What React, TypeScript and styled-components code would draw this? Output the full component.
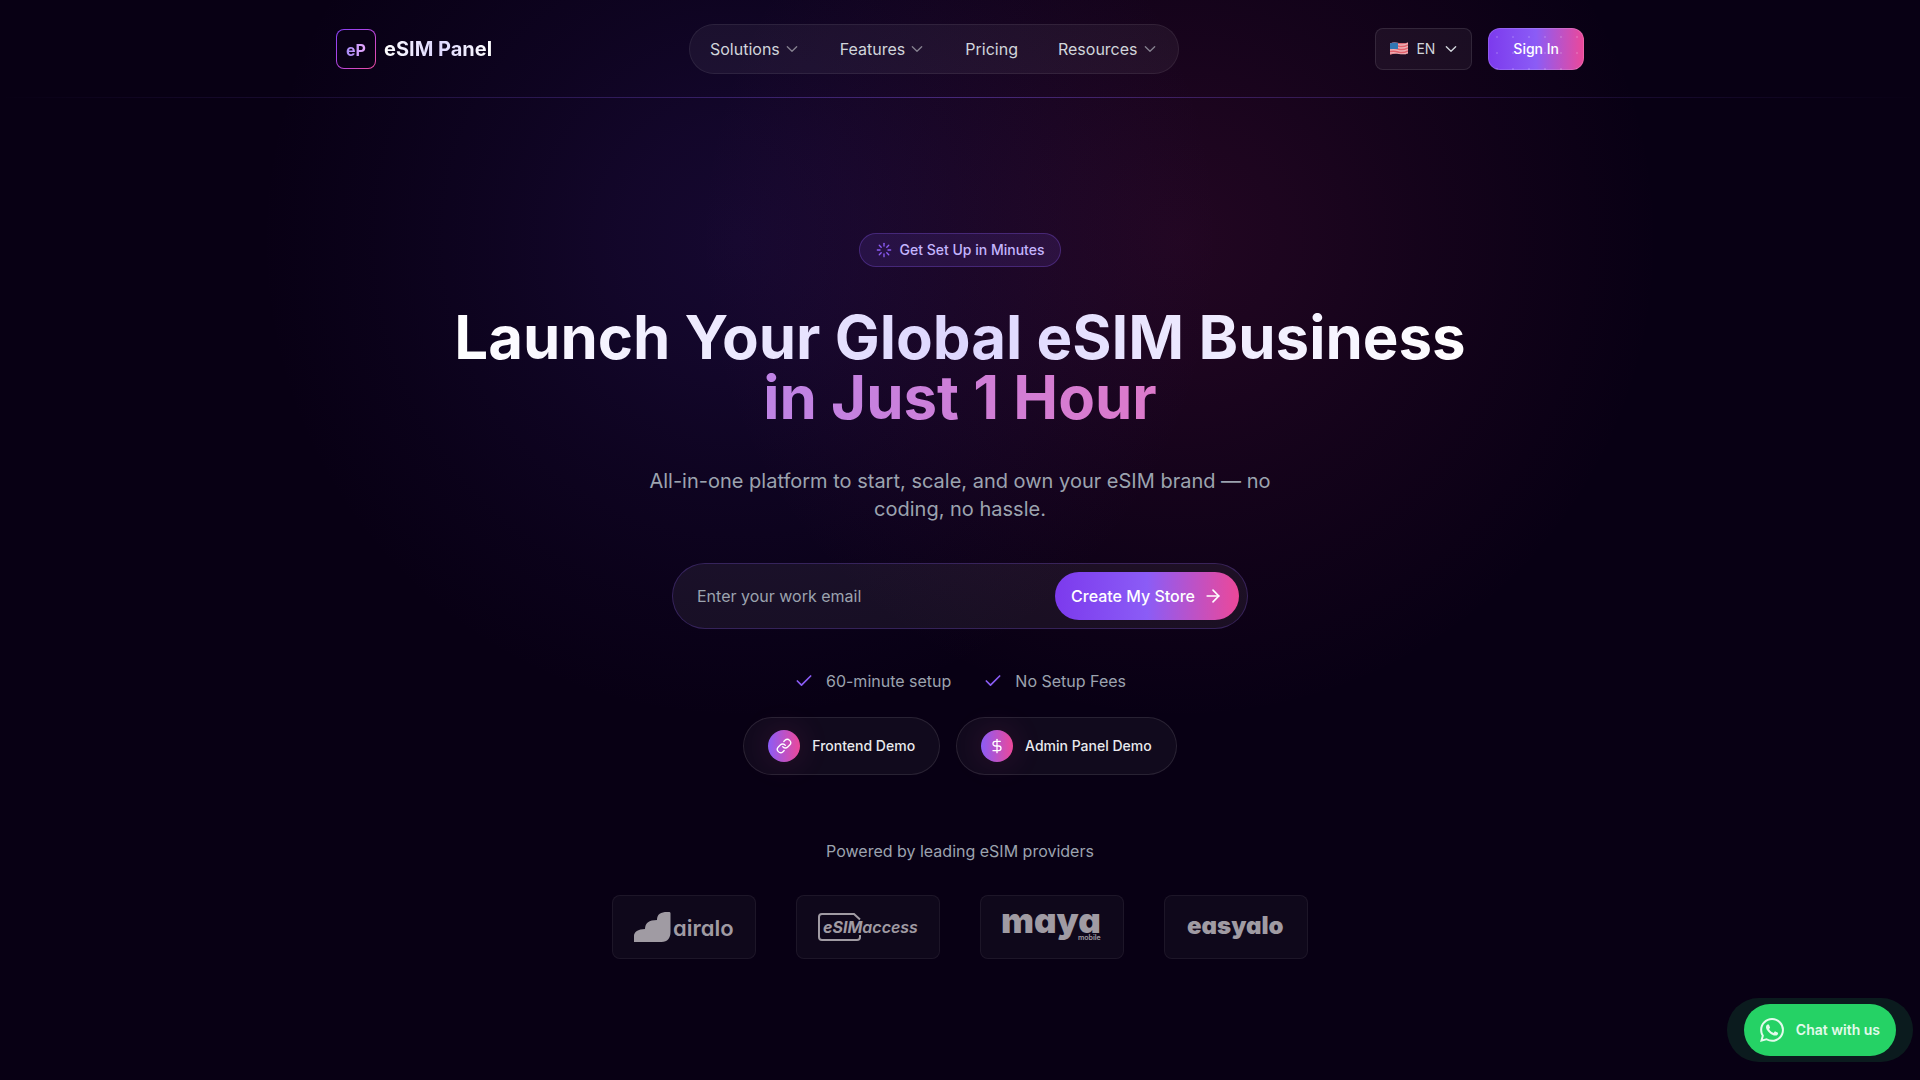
import React from "react";
import styled, { createGlobalStyle, css } from "styled-components";
import { ArrowRight, Check, DollarSign, Link, Loader } from "lucide-react";
import { SiWhatsapp } from "react-icons/si";

const font = `Inter, "Noto Sans", sans-serif`;

const GlobalStyle = createGlobalStyle`
  *, *::before, *::after { box-sizing: border-box; }
  html { background: #080014; }
  body {
    margin: 0;
    font-family: ${font};
    font-size: 16px;
    line-height: 24px;
    color: #fff;
    -webkit-font-smoothing: antialiased;
  }
  h1, p, ul { margin: 0; padding: 0; }
  ul { list-style: none; }
  a { color: inherit; text-decoration: none; }
  button, input, select { font: inherit; color: inherit; }
`;

const brandGradient = css`
  background-image: linear-gradient(90deg, #7c3aed 0%, #8b5cf6 50%, #ec4899 100%);
`;

const Page = styled.div`
  min-height: 100vh;
  background:
    radial-gradient(circle 480px at calc(50% - 220px) 240px, rgba(91, 50, 190, 0.16), rgba(91, 50, 190, 0.13) 25%, rgba(91, 50, 190, 0.08) 50%, rgba(91, 50, 190, 0.03) 78%, transparent),
    radial-gradient(circle 480px at calc(50% + 220px) 240px, rgba(190, 44, 116, 0.14), rgba(190, 44, 116, 0.11) 25%, rgba(190, 44, 116, 0.07) 50%, rgba(190, 44, 116, 0.03) 78%, transparent),
    #080014;
`;

const Header = styled.header`
  padding: 24px 16px 23px;
  border-bottom: 1px solid;
  border-image: linear-gradient(90deg, transparent, rgba(139, 92, 246, 0.4) 50%, transparent) 1;
`;

const HeaderInner = styled.div`
  display: flex;
  align-items: center;
  justify-content: space-between;
  max-width: 1248px;
  margin: 0 auto;
`;

const Brand = styled.a`
  display: flex;
  align-items: center;
  gap: 8px;
`;

const BrandMark = styled.span`
  display: grid;
  place-items: center;
  width: 40px;
  height: 40px;
  border: 1px solid transparent;
  border-radius: 8px;
  background:
    linear-gradient(#0a0116, #0a0116) padding-box,
    linear-gradient(135deg, #8440f5, #b846e0 50%, #f04da0) border-box;
`;

const GradientText = styled.span<{ $stops: string }>`
  background: linear-gradient(90deg, ${(p) => p.$stops});
  -webkit-background-clip: text;
  background-clip: text;
  color: transparent;
`;

const Monogram = styled(GradientText)`
  font-size: 16px;
  font-weight: 700;
  padding-top: 2px;
`;

const BrandName = styled(GradientText)`
  font-size: 20px;
  line-height: 28px;
  font-weight: 700;
`;

const Nav = styled.nav`
  display: flex;
  gap: 8px;
  padding: 4px;
  border: 1px solid rgba(255, 255, 255, 0.07);
  border-radius: 32px;
  background: rgba(255, 255, 255, 0.05);
`;

const NavItem = styled.button`
  display: flex;
  align-items: center;
  gap: 4px;
  padding: 8px 16px;
  border: 0;
  background: none;
  color: #d1d5db;
  cursor: pointer;
`;

const NavLink = styled(NavItem).attrs({ as: "a" })<{ href: string }>``;

const Actions = styled.div`
  display: flex;
  gap: 16px;
`;

const Language = styled.label`
  display: flex;
  align-items: center;
  gap: 8px;
  height: 42px;
  padding: 0 12px;
  border: 1px solid rgba(255, 255, 255, 0.1);
  border-radius: 8px;
  background: rgba(255, 255, 255, 0.05);
  font-size: 14px;
  line-height: 20px;
  color: #d1d5db;
`;

const LanguageSelect = styled.select`
  appearance: none;
  padding: 0;
  border: 0;
  background: none;
  cursor: pointer;
  field-sizing: content;
  option { color: #111; }
`;

const SignIn = styled.a`
  display: flex;
  align-items: center;
  height: 42px;
  padding: 0 24px;
  border: 1px solid rgba(255, 255, 255, 0.15);
  border-radius: 12px;
  background:
    radial-gradient(circle at 1px 1px, rgba(255, 255, 255, 0.14) 1px, transparent 1px) 7px 7px / 16px 16px,
    linear-gradient(90deg, #7c3aed, #8b5cf6 50%, #ec4899) border-box;
  font-size: 14px;
  line-height: 20px;
  font-weight: 500;
`;

const Hero = styled.main`
  display: flex;
  flex-direction: column;
  align-items: center;
  gap: 40px;
  padding: 135px 16px 96px;
  text-align: center;
`;

const Badge = styled.div`
  display: flex;
  align-items: center;
  gap: 8px;
  padding: 6px 16px;
  border: 1px solid rgba(139, 92, 246, 0.3);
  border-radius: 17px;
  background: rgba(139, 92, 246, 0.12);
  font-size: 14px;
  line-height: 20px;
  font-weight: 500;
  color: #c4b5fd;
  svg { color: #8b5cf6; }
`;

const Title = styled.h1`
  font-size: 60px;
  line-height: 60px;
  font-weight: 700;
`;

const TitleLine = styled(GradientText)`
  display: block;
`;

const Lead = styled.p`
  max-width: 672px;
  font-size: 20px;
  line-height: 28px;
  color: #9ca3af;
`;

const SignupForm = styled.form`
  display: flex;
  width: 100%;
  max-width: 576px;
  padding: 8px;
  border: 1px solid rgba(139, 92, 246, 0.25);
  border-radius: 33px;
  background: rgba(255, 255, 255, 0.06);
`;

const EmailInput = styled.input`
  flex: 1;
  min-width: 0;
  padding: 0 16px;
  border: 0;
  outline: 0;
  background: none;
  &::placeholder { color: #9ca3af; opacity: 1; }
`;

const SubmitButton = styled.button`
  display: flex;
  align-items: center;
  gap: 8px;
  padding: 12px 16px;
  border: 0;
  border-radius: 24px;
  ${brandGradient}
  font-weight: 500;
  cursor: pointer;
`;

const Proof = styled.div`
  display: flex;
  flex-direction: column;
  align-items: center;
  gap: 24px;
`;

const CheckList = styled.ul`
  display: flex;
  flex-wrap: wrap;
  gap: 32px;
`;

const CheckItem = styled.li`
  display: flex;
  align-items: center;
  gap: 12px;
  color: #9ca3af;
  svg { color: #8b5cf6; }
`;

const DemoRow = styled.div`
  display: flex;
  flex-wrap: wrap;
  gap: 16px;
`;

const DemoLink = styled.a`
  display: flex;
  align-items: center;
  gap: 12px;
  padding: 12px 24px;
  border: 1px solid rgba(255, 255, 255, 0.1);
  border-radius: 29px;
  background: rgba(255, 255, 255, 0.04);
  font-size: 14px;
  line-height: 20px;
  font-weight: 500;
  color: #e9eaee;
`;

const DemoIcon = styled.span`
  display: grid;
  place-items: center;
  width: 32px;
  height: 32px;
  border-radius: 50%;
  background: linear-gradient(90deg, #8b5cf6, #ec4899);
  box-shadow: 0 0 32px rgba(236, 72, 153, 0.16);
  color: #fff;
`;

const Providers = styled.section`
  display: flex;
  flex-direction: column;
  align-items: center;
  gap: 32px;
  padding-top: 24px;
  color: #9ca3af;
`;

const ProviderList = styled.ul`
  display: flex;
  flex-wrap: wrap;
  justify-content: center;
  gap: 40px;
`;

const ProviderCard = styled.li`
  display: grid;
  place-items: center;
  width: 144px;
  height: 64px;
  border: 1px solid rgba(255, 255, 255, 0.06);
  border-radius: 8px;
  background: rgba(255, 255, 255, 0.03);
`;

const LogoSvg = styled.svg`
  display: block;
  overflow: visible;
  fill: #a09ba3;
  font-family: ${font};
  font-feature-settings: "cv11";
`;

const ChatLink = styled.a`
  position: fixed;
  right: 24px;
  bottom: 24px;
  display: flex;
  align-items: center;
  gap: 12px;
  padding: 14px 16px;
  border-radius: 26px;
  background: #25d366;
  font-size: 14px;
  font-weight: 600;
  color: #e3faec;
  &::before {
    content: "";
    position: absolute;
    inset: -6px -17px;
    z-index: -1;
    border-radius: 32px;
    background: rgba(37, 211, 102, 0.13);
  }
`;

function Chevron({ color = "#85808f" }: { color?: string }) {
  return (
    <svg width="16" height="16" viewBox="0 0 24 24" fill="none" stroke={color} strokeWidth="2" strokeLinecap="round" strokeLinejoin="round" aria-hidden="true">
      <path d="M19 8.500l-7 7-7-7" />
    </svg>
  );
}

function UsFlag() {
  return (
    <svg width="20" height="16" viewBox="0 0 20 16" aria-hidden="true">
      <clipPath id="flag-wave">
        <path d="M2 2.500C5 1 8 1.500 11 2S17 2.500 20 1.500v11c-3 1-6 1-9 .5S5 12.500 2 13.500z" />
      </clipPath>
      <g clipPath="url(#flag-wave)">
        <rect width="20" height="16" fill="#eeb0b6" />
        {[2, 5, 8, 11, 14].map((y) => (
          <path key={y} d={`M0 ${y}C4 ${y - 1} 7 ${y - 1} 10 ${y}S16 ${y + 1} 20 ${y - 1}`} stroke="#e2606c" strokeWidth="1.500" fill="none" />
        ))}
        <path d="M0 0h10v8H0z" fill="#3276b4" />
      </g>
    </svg>
  );
}

function AiraloLogo() {
  return (
    <LogoSvg width="102" height="32" viewBox="0 0 102 32" role="img" aria-label="airalo">
      <path d="M1 31v-6c0-4 4-7 11-7 0-6 4-9 12-9 0-6 4-8 10-8h2c1 0 1.500.5 1.500 1.500V21c0 6-3 10-9 10z" />
      <text x="40" y="25" fontSize="22" fontWeight="600">airalo</text>
    </LogoSvg>
  );
}

function EsimAccessLogo() {
  return (
    <LogoSvg width="102" height="30" viewBox="0 0 102 30" role="img" aria-label="eSIMaccess">
      <path d="M43 7.500 37 2H5C3 2 2 3 2 5v20c0 2 1 3 3 3h35c2 0 3-1 3-3v-2" fill="none" stroke="#a09ba3" strokeWidth="2" />
      <text x="6" y="21" fontSize="16" fontWeight="700" fontStyle="italic">eSIM<tspan fontWeight="600">access</tspan></text>
    </LogoSvg>
  );
}

function MayaLogo() {
  return (
    <LogoSvg width="102" height="34" viewBox="0 0 102 34" role="img" aria-label="maya mobile">
      <text x="0" y="23" fontSize="35" fontWeight="900">maya</text>
      <text x="77" y="30" fontSize="7" fontWeight="600">mobile</text>
    </LogoSvg>
  );
}

function EasyaloLogo() {
  return (
    <LogoSvg width="98" height="32" viewBox="0 0 98 32" role="img" aria-label="easyalo">
      <text x="0" y="23" fontSize="24" fontWeight="900">easyalo</text>
    </LogoSvg>
  );
}

const menu = [
  { label: "Solutions", menu: true },
  { label: "Features", menu: true },
  { label: "Pricing", menu: false },
  { label: "Resources", menu: true },
];

const providers = [AiraloLogo, EsimAccessLogo, MayaLogo, EasyaloLogo];

export default function App() {
  return (
    <Page>
      <GlobalStyle />
      <Header>
        <HeaderInner>
          <Brand href="#">
            <BrandMark><Monogram $stops="#a78bfa, #e9a8fc">eP</Monogram></BrandMark>
            <BrandName $stops="#fff, #ddd6fe 50%, #fff">eSIM Panel</BrandName>
          </Brand>
          <Nav aria-label="Main">
            {menu.map((item) =>
              item.menu ? (
                <NavItem key={item.label} type="button" aria-haspopup="menu">
                  {item.label}
                  <Chevron />
                </NavItem>
              ) : (
                <NavLink key={item.label} href="#pricing">{item.label}</NavLink>
              )
            )}
          </Nav>
          <Actions>
            <Language>
              <UsFlag />
              <LanguageSelect aria-label="Language" defaultValue="EN">
                <option>EN</option>
              </LanguageSelect>
              <Chevron color="#d1d5db" />
            </Language>
            <SignIn href="#sign-in">Sign In</SignIn>
          </Actions>
        </HeaderInner>
      </Header>

      <Hero>
        <Badge>
          <Loader size={16} aria-hidden="true" />
          Get Set Up in Minutes
        </Badge>
        <Title>
          <TitleLine $stops="#fff, #ddd6fe 50%, #fff">Launch Your Global eSIM Business</TitleLine>
          <TitleLine $stops="#a78bfa, #f472b6">in Just 1 Hour</TitleLine>
        </Title>
        <Lead>All-in-one platform to start, scale, and own your eSIM brand — no coding, no hassle.</Lead>
        <SignupForm onSubmit={(e) => e.preventDefault()}>
          <EmailInput type="email" aria-label="Work email" placeholder="Enter your work email" />
          <SubmitButton type="submit">
            Create My Store
            <ArrowRight size={20} aria-hidden="true" />
          </SubmitButton>
        </SignupForm>
        <Proof>
          <CheckList>
            {["60-minute setup", "No Setup Fees"].map((text) => (
              <CheckItem key={text}>
                <Check size={20} aria-hidden="true" />
                {text}
              </CheckItem>
            ))}
          </CheckList>
          <DemoRow>
            <DemoLink href="#frontend-demo">
              <DemoIcon><Link size={16} aria-hidden="true" /></DemoIcon>
              Frontend Demo
            </DemoLink>
            <DemoLink href="#admin-demo">
              <DemoIcon><DollarSign size={16} aria-hidden="true" /></DemoIcon>
              Admin Panel Demo
            </DemoLink>
          </DemoRow>
        </Proof>
        <Providers>
          <p>Powered by leading eSIM providers</p>
          <ProviderList>
            {providers.map((Logo, i) => (
              <ProviderCard key={i}><Logo /></ProviderCard>
            ))}
          </ProviderList>
        </Providers>
      </Hero>

      <ChatLink href="#chat">
        <SiWhatsapp size={24} aria-hidden="true" />
        Chat with us
      </ChatLink>
    </Page>
  );
}
